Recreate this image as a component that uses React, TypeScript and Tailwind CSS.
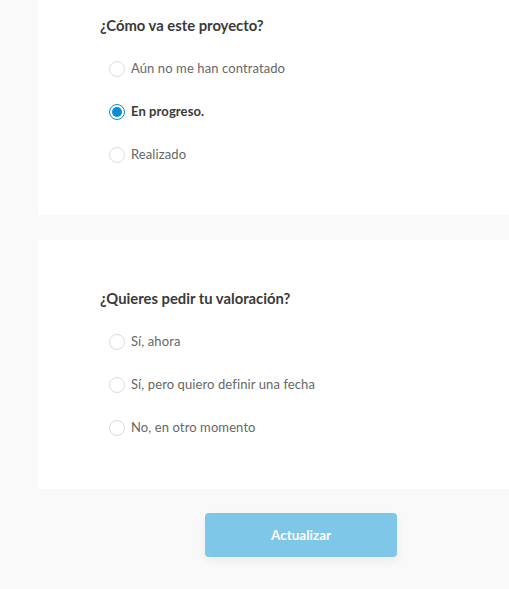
import React from "react";

function Radio({ checked }: { checked?: boolean }) {
  return checked ? (
    <span className="flex h-[16px] w-[16px] shrink-0 items-center justify-center rounded-full border-[1.5px] border-[#0a8dd8] bg-white">
      <span className="h-[10px] w-[10px] rounded-full bg-[#0a8dd8]" />
    </span>
  ) : (
    <span className="h-[16px] w-[16px] shrink-0 rounded-full border border-[#dcdcdc] bg-white" />
  );
}

function Option({ label, checked, first }: { label: string; checked?: boolean; first?: boolean }) {
  return (
    <label className={`flex h-[20px] items-center gap-[6px] pl-[71px] ${first ? "mt-[24px]" : "mt-[23px]"}`}>
      <Radio checked={checked} />
      <span
        className={
          checked
            ? "text-[13px] font-bold tracking-[0.1px] text-[#3a3a3a]"
            : "text-[13px] tracking-[0.1px] text-[#676767]"
        }
      >
        {label}
      </span>
    </label>
  );
}

export default function App() {
  return (
    <div
      className="h-[589px] w-full overflow-hidden bg-[#f9f9f9]"
      style={{ fontFamily: "Lato, 'Noto Sans', sans-serif" }}
    >
      <div className="ml-[38px] flex h-[215px] flex-col bg-white pt-[15px]">
        <h2 className="flex h-[20px] items-center pl-[62px] text-[14.8px] font-bold text-[#3a3a3a]">
          ¿Cómo va este proyecto?
        </h2>
        <Option label="Aún no me han contratado" first />
        <Option label="En progreso." checked />
        <Option label="Realizado" />
      </div>
      <div className="ml-[38px] mt-[25px] flex h-[249px] flex-col bg-white pt-[48px]">
        <h2 className="flex h-[20px] items-center pl-[62px] text-[14.8px] font-bold text-[#3a3a3a]">
          ¿Quieres pedir tu valoración?
        </h2>
        <Option label="Sí, ahora" first />
        <Option label="Sí, pero quiero definir una fecha" />
        <Option label="No, en otro momento" />
      </div>
      <div className="mt-[24px] pl-[205px]">
        <button className="flex h-[44px] w-[192px] items-center justify-center rounded-[4px] bg-[#7fc7e9] text-[13.5px] font-bold text-white shadow-[0_4px_10px_rgba(0,0,0,0.06)]">
          Actualizar
        </button>
      </div>
    </div>
  );
}
